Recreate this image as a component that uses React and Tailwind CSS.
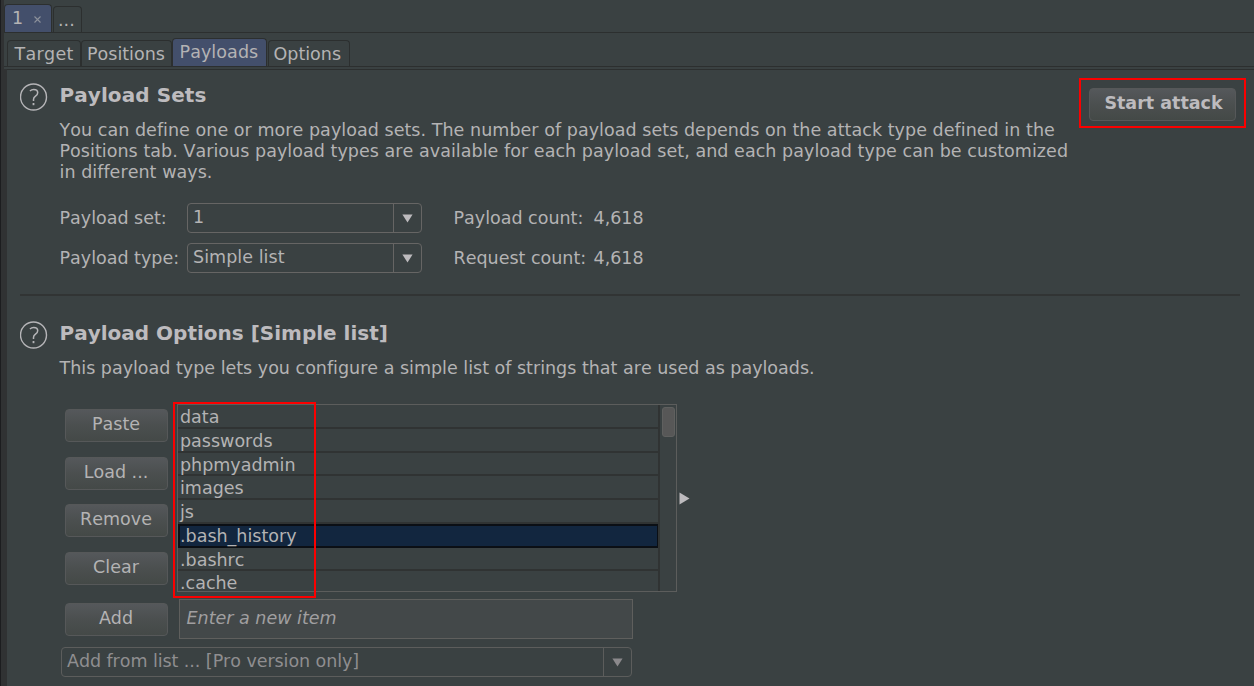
import React from 'react';

function Help() {
  return (
    <svg className="block h-7 w-7 shrink-0" viewBox="0 0 28 28" fill="none" stroke="#b6b5b8" strokeWidth="1.4">
      <circle cx="13.5" cy="14" r="13" />
      <path d="M9.9 8 Q11.6 6.6 13.7 6.6 Q17.7 6.6 17.7 9.8 Q17.7 11.6 15.5 13.2 Q13.5 14.8 13.5 16.4 L13.5 18" strokeWidth="1.5" />
      <path d="M13.5 20 V22.2" strokeWidth="1.8" />
    </svg>
  );
}

function Arrow({ dim }) {
  return (
    <svg className="block h-[9px] w-[11px]" viewBox="0 0 11 9">
      <path d="M0.4 0.5 H10.6 L5.5 8.5 Z" fill={dim ? '#8b898c' : '#bdbbbe'} />
    </svg>
  );
}

function Combo({ children }) {
  return (
    <div className="flex h-[30px] w-[235px] rounded-[4px] border border-[#666564]">
      <div className="flex-1 pl-[5px] leading-[27px] tracking-[0.05px]">{children}</div>
      <div className="flex w-[28px] items-center justify-center border-l border-[#666564]">
        <Arrow />
      </div>
    </div>
  );
}

function Button({ children, className = 'w-[103px] pb-[2px]' }) {
  return (
    <div
      className={`flex h-[33px] items-center justify-center rounded-[4px] border border-[#565859] bg-linear-to-b from-[#55585b] via-[#4b4f4f] to-[#444947] ${className}`}
    >
      {children}
    </div>
  );
}

function Tab({ children, className }) {
  return (
    <div className={`rounded-t-[4px] border border-b-0 border-[#2c2f2f] ${className}`}>{children}</div>
  );
}

const items = ['data', 'passwords', 'phpmyadmin', 'images', 'js', '.bash_history', '.bashrc', '.cache'];

export default function App() {
  return (
    <div className="flex h-[686px] w-[1254px] overflow-hidden whitespace-nowrap bg-[#3a4142] font-['DejaVu_Sans',sans-serif] text-[17.5px] text-[#b4b3b4] [font-kerning:none] [font-variant-ligatures:none]">
      <div className="w-px shrink-0 bg-[#1c1d1f]" />
      <div className="w-[3px] shrink-0 bg-[#303233]" />
      <div className="flex min-w-0 flex-1 flex-col">
        <div className="flex h-[33px] items-end border-b border-[#2c2f2f]">
          <Tab className="mr-[1px] flex h-[28px] w-[48px] items-center bg-[#434f6b] pl-[7px]">
            <span>1</span>
            <svg className="ml-[11px] mt-[2px] h-[7px] w-[7px]" viewBox="0 0 7 7" stroke="#8c919b" strokeWidth="1.1">
              <path d="M0.5 0.5 L6.5 6.5 M6.5 0.5 L0.5 6.5" />
            </svg>
          </Tab>
          <Tab className="h-[26px] w-[29px] pl-[4px] leading-[27px]">...</Tab>
        </div>
        <div className="flex h-[34px] items-end border-b border-[#2c2f2f] pl-[3px]">
          <Tab className="h-[26px] w-[74px] pl-[6.5px] leading-[27px] tracking-[0.3px]">Target</Tab>
          <Tab className="h-[26px] w-[91px] pl-[5px] leading-[27px]">Positions</Tab>
          <Tab className="h-[28px] w-[95px] bg-[#434f6b] pl-[6.5px] leading-[27px] tracking-[0.08px]">Payloads</Tab>
          <Tab className="ml-px h-[26px] w-[82px] pl-[4.5px] leading-[27px]">Options</Tab>
        </div>
        <div className="flex min-h-0 flex-1 pt-[2px]">
          <div className="w-[3px] shrink-0 bg-[#303233]" />
          <div className="min-w-0 flex-1 border-t border-[#2c2f2f]">
            <div className="flex h-[133px] pl-[12.5px]">
              <div className="pt-[12.5px]">
                <Help />
              </div>
              <div className="ml-[12px] w-[1019.5px] shrink-0 pt-[12px]">
                <div className="h-[26px] text-[20px] font-bold leading-[26px] text-[#bdbbbe] tracking-[0.08px]">Payload Sets</div>
                <div className="pt-[11.5px] leading-[21px] tracking-[0.045px]">
                  You can define one or more payload sets. The number of payload sets depends on the attack type defined in the
                  <br />
                  Positions tab. Various payload types are available for each payload set, and each payload type can be customized
                  <br />
                  in different ways.
                </div>
              </div>
              <div className="mt-[8px] flex h-[50px] w-[167px] shrink-0 items-center justify-center border-2 border-[#fb0000]">
                <Button className="relative top-px w-[147px] pl-[2px] font-bold text-[#bdbbbe] pb-[2px]">Start attack</Button>
              </div>
            </div>
            <div className="flex h-[30px] pl-[52.5px] leading-[30px]">
              <div className="w-[127.5px]">Payload set:</div>
              <Combo>1</Combo>
              <div className="ml-[31.5px] w-[140px]">Payload count:</div>
              <div>4,618</div>
            </div>
            <div className="mt-[10px] flex h-[30px] pl-[52.5px] leading-[30px]">
              <div className="w-[127.5px]">Payload type:</div>
              <Combo>Simple list</Combo>
              <div className="ml-[31.5px] w-[140px]">Request count:</div>
              <div>4,618</div>
            </div>
            <div className="ml-[13px] mt-[21px] h-[2px] w-[1220px] bg-[#313434]" />
            <div className="flex h-[108px] pl-[12.5px] pt-[25px]">
              <Help />
              <div className="-mt-px ml-[12px]">
                <div className="text-[20px] font-bold leading-[26px] text-[#bdbbbe]">Payload Options [Simple list]</div>
                <div className="pt-[12px] leading-[21px]">
                  This payload type lets you configure a simple list of strings that are used as payloads.
                </div>
              </div>
            </div>
            <div className="flex h-[195px] pl-[57.5px]">
              <div className="flex w-[102.5px] flex-col gap-[14.5px] pt-[5px]">
                <Button>Paste</Button>
                <Button>Load ...</Button>
                <Button>Remove</Button>
                <Button>Clear</Button>
              </div>
              <div className="relative ml-[10px] h-[188px] w-[500px] border border-[#5c5d5c]">
                <div className="flex h-full">
                  <div className="flex w-[481px] flex-col">
                    {items.map((t) => (
                      <div
                        key={t}
                        className={
                          t === '.bash_history'
                            ? 'h-[23.75px] shrink-0 border-2 border-[#0b0f15] bg-[#12263f] leading-[20px]'
                            : 'h-[23.75px] shrink-0 border-b-2 border-[#303333] pl-[2px] leading-[24px] last:h-[19px] last:border-b-0'
                        }
                      >
                        {t}
                      </div>
                    ))}
                  </div>
                  <div className="-ml-px flex-1 border-l-2 border-[#303333] pl-[2px] pt-[2px]">
                    <div className="h-[30px] w-[13px] rounded-[3px] border border-[#5f605f] bg-[#575757]" />
                  </div>
                </div>
                <div className="absolute -left-[5px] -top-[3px] h-[196px] w-[143px] border-2 border-[#fb0000]" />
              </div>
              <svg className="ml-[2px] mt-[88px] h-[13px] w-[11px]" viewBox="0 0 11 13">
                <path d="M0.5 0.5 L10.5 6.5 L0.5 12.5 Z" fill="#bdbbbe" />
              </svg>
            </div>
            <div className="flex pl-[57.5px]">
              <Button className="mt-[4px] w-[103px] pb-[2px]">Add</Button>
              <div className="ml-[11px] h-[40px] w-[454px] border border-[#5f5f5d] bg-[#434849] pl-[7px] italic leading-[37px] text-[#a09fa0]">
                Enter a new item
              </div>
            </div>
            <div className="ml-[54px] mt-[8px] flex h-[30px] w-[571px] rounded-[4px] border border-[#5c5d5c] text-[#8f8e90]">
              <div className="flex-1 pl-[5px] leading-[27px] tracking-[-0.06px]">Add from list ... [Pro version only]</div>
              <div className="flex w-[28px] items-center justify-center border-l border-[#5c5d5c]">
                <Arrow dim />
              </div>
            </div>
          </div>
        </div>
      </div>
    </div>
  );
}
